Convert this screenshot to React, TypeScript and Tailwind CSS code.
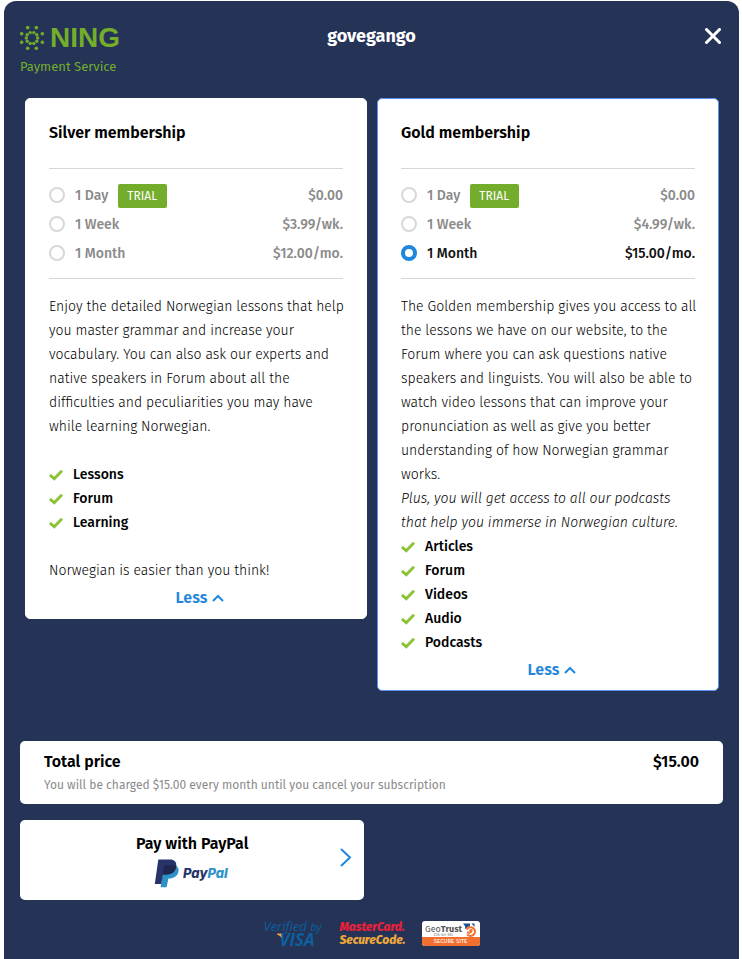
import { useState } from "react";
import type { ReactNode } from "react";

type Option = { id: string; label: string; price: string; trial?: boolean; amount: string };

const silverOptions: Option[] = [
  { id: "silver-day", label: "1 Day", price: "$0.00", trial: true, amount: "$0.00" },
  { id: "silver-week", label: "1 Week", price: "$3.99/wk.", amount: "$3.99" },
  { id: "silver-month", label: "1 Month", price: "$12.00/mo.", amount: "$12.00" },
];

const goldOptions: Option[] = [
  { id: "gold-day", label: "1 Day", price: "$0.00", trial: true, amount: "$0.00" },
  { id: "gold-week", label: "1 Week", price: "$4.99/wk.", amount: "$4.99" },
  { id: "gold-month", label: "1 Month", price: "$15.00/mo.", amount: "$15.00" },
];

const outerDots = [
  [7.7, 1.7], [16.3, 1.7], [1.7, 7.7], [22.3, 7.7],
  [1.7, 16.3], [22.3, 16.3], [7.7, 22.3], [16.3, 22.3],
];

const innerDots = [
  [10.2, 6.6], [13.8, 6.6], [7.2, 8.8], [16.8, 8.8], [6.3, 12], [17.7, 12],
  [7.2, 15.2], [16.8, 15.2], [10.2, 17.4], [13.8, 17.4],
];

function NingLogo() {
  return (
    <div className="flex flex-col text-[#73ad2b]">
      <div className="flex h-6 items-center gap-1.5">
        <svg viewBox="0 0 24 24" className="size-6 fill-current" aria-hidden="true">
          {outerDots.map(([x, y]) => (
            <circle key={`${x}-${y}`} cx={x} cy={y} r="1.8" />
          ))}
          {innerDots.map(([x, y]) => (
            <circle key={`${x}-${y}`} cx={x} cy={y} r="1.7" />
          ))}
        </svg>
        <span className="font-['Liberation_Sans',sans-serif] text-[28px] leading-6 font-bold">NING</span>
      </div>
      <span className="mt-[7px] text-[13px] leading-5">Payment Service</span>
    </div>
  );
}

function Check() {
  return (
    <svg viewBox="0 0 14 12" className="h-3 w-3.5" fill="none" stroke="#8bc234" strokeWidth="2.8" aria-hidden="true">
      <path d="M1 5.9 L5.2 9.7 L13 1.7" />
    </svg>
  );
}

function Features({ items }: { items: string[] }) {
  return (
    <ul>
      {items.map((item) => (
        <li key={item} className="flex items-center gap-2.5 font-medium text-black">
          <Check />
          {item}
        </li>
      ))}
    </ul>
  );
}

type CardProps = {
  title: string;
  options: Option[];
  selected: string;
  onSelect: (id: string) => void;
  children: ReactNode;
};

function MembershipCard({ title, options, selected, onSelect, children }: CardProps) {
  const active = options.some((option) => option.id === selected);
  return (
    <section
      className={`rounded-[5px] border bg-white px-[23px] pt-6 pb-2 ${active ? "border-[#5b93ee]" : "border-white"}`}
    >
      <h2 className="text-base leading-5 font-semibold text-black">{title}</h2>
      <div className="mt-[25px] flex flex-col gap-[5px] border-y border-[#d6d6d6] pt-[15px] pb-3">
        {options.map((option) => {
          const checked = option.id === selected;
          return (
            <label
              key={option.id}
              htmlFor={option.id}
              className={`flex h-6 items-center text-sm font-medium ${checked ? "text-[#111111]" : "text-[#8a8a8a]"}`}
            >
              <input
                id={option.id}
                type="radio"
                name="membership"
                checked={checked}
                onChange={() => onSelect(option.id)}
                className="mr-2.5 mb-0.5 size-4 appearance-none rounded-full border-2 border-[#d8d8d8] bg-white checked:border-4 checked:border-[#1f88dd]"
              />
              {option.label}
              {option.trial && (
                <span className="ml-2.5 rounded-xs bg-[#73ad2b] pr-2.5 pl-[9px] text-xs leading-6 font-normal text-white">
                  TRIAL
                </span>
              )}
              <span className="ml-auto">{option.price}</span>
            </label>
          );
        })}
      </div>
      <div className="mt-4 -mr-1 text-sm leading-6 font-light text-black">{children}</div>
      <button
        type="button"
        className="mx-auto mt-[3px] flex items-center gap-[5px] pl-2 text-base leading-6 font-semibold text-[#1f88dd]"
      >
        Less
        <svg viewBox="0 0 12 8" className="h-2 w-3" fill="none" stroke="currentColor" strokeWidth="2" aria-hidden="true">
          <path d="M1 7 L6 2 L11 7" />
        </svg>
      </button>
    </section>
  );
}

function PayPalLogo() {
  return (
    <svg viewBox="0 0 76 30" className="h-[30px] w-[76px]" aria-hidden="true">
      <path
        d="M21.6 7.6 C24.4 9 25.1 11.4 24.4 14.1 C23.4 18 20 20.4 16.2 20.4 H14.4 L12.6 29.2 H6.6 L7.5 23 L10 9 Z"
        fill="#2c92c8"
      />
      <path
        d="M4.3 1.4 H16 C20.3 1.4 22.8 3.8 22.3 8 C21.7 13.4 18 16.4 12.5 16.4 H9 L7.2 26 H.8 Z"
        fill="#27346a"
      />
      <path
        d="M10.4 7.2 H20 C20.8 7.2 21.7 7.5 22.3 8 C21.7 13.4 18 16.4 12.5 16.4 H8.8 Z"
        fill="#1f264f"
      />
      <text x="29" y="20" fontSize="13" fontWeight="800" fontStyle="italic" fontFamily="Inter, sans-serif">
        <tspan fill="#27346a">Pay</tspan>
        <tspan fill="#2c92c8">Pal</tspan>
      </text>
    </svg>
  );
}

function VerifiedByVisa() {
  return (
    <div className="flex w-[60px] flex-col font-['Open_Sans',sans-serif] text-[#0d609f] italic">
      <span className="text-[13px] leading-3 whitespace-nowrap">
        Verified <span className="text-[11px]">by</span>
      </span>
      <span className="flex items-start pl-3.5">
        <svg viewBox="0 0 6 8" className="-mr-1 h-2 w-1.5" aria-hidden="true">
          <path d="M0 .6 H3.6 C4.8 .6 5.2 1.4 5.4 2.4 L6 8 C5 4.6 3 2.6 0 1.6 Z" fill="#e9a63a" />
        </svg>
        <span className="text-[17px] leading-[14px] font-bold">VISA</span>
      </span>
    </div>
  );
}

function MasterCardSecureCode() {
  return (
    <div className="flex flex-col text-xs leading-[13px] font-extrabold italic">
      <span className="text-[#e8203a]">MasterCard.</span>
      <span className="text-[#eda73b]">SecureCode.</span>
    </div>
  );
}

function GeoTrust() {
  return (
    <div className="flex h-[25px] w-[58px] flex-col overflow-hidden rounded-[3px] bg-white">
      <div className="flex h-4 items-start justify-center">
        <span className="flex flex-col items-center pt-1">
          <span className="text-[9px] leading-[8px] text-[#555555]">
            Geo<span className="font-bold">Trust</span>
          </span>
          <span className="text-[4px] leading-[4px] text-[#777777]">256-bit SSL</span>
        </span>
        <svg viewBox="0 0 14 14" className="mt-0.5 size-3.5" aria-hidden="true">
          <path d="M1 .5 H8 V3 A6 6 0 0 0 3.4 6.2 A6.6 6.6 0 0 0 1 .5 Z" fill="#1c4f8f" />
          <path d="M9.5 .5 H12.5 V4 Z" fill="#1c4f8f" />
          <path d="M5.2 11.4 A4.4 4.4 0 1 0 4.6 6.6 M5 9.2 C7 10.4 9.4 9.6 9.6 7.4 M7.2 7.2 H10.6" fill="none" stroke="#f1702f" strokeWidth="2" />
        </svg>
      </div>
      <span className="bg-[#f1702f] text-center text-[6px] leading-[9px] font-normal text-white">SECURE SITE</span>
    </div>
  );
}

export default function App() {
  const [selected, setSelected] = useState("gold-month");
  const current = [...silverOptions, ...goldOptions].find((option) => option.id === selected);
  const amount = current ? current.amount : "$0.00";
  const period = selected.endsWith("week") ? "week" : selected.endsWith("day") ? "day" : "month";

  return (
    <div className="bg-white pt-px pr-[3px] pl-1 font-['Fira_Sans',Roboto,sans-serif]">
      <main className="min-h-[calc(100vh-1px)] rounded-t-xl bg-[#243356] px-4 pt-[25px] pb-3">
        <header className="grid grid-cols-[1fr_auto_1fr] items-start">
          <NingLogo />
          <h1 className="text-lg leading-5 font-bold text-white">govegango</h1>
          <button type="button" aria-label="Close" className="justify-self-end p-0.5 text-white">
            <svg viewBox="0 0 16 16" className="size-4" fill="none" stroke="currentColor" strokeWidth="3" strokeLinecap="round" aria-hidden="true">
              <path d="M1.5 1.5 L14.5 14.5 M14.5 1.5 L1.5 14.5" />
            </svg>
          </button>
        </header>

        <div className="mt-[21px] grid grid-cols-2 items-start gap-2.5 pr-1 pl-[5px]">
          <MembershipCard title="Silver membership" options={silverOptions} selected={selected} onSelect={setSelected}>
            <p>
              Enjoy the detailed Norwegian lessons that help you master grammar and increase your vocabulary. You can
              also ask our experts and native speakers in Forum about all the difficulties and peculiarities you may
              have while learning Norwegian.
            </p>
            <div className="py-6">
              <Features items={["Lessons", "Forum", "Learning"]} />
            </div>
            <p>Norwegian is easier than you think!</p>
          </MembershipCard>

          <MembershipCard title="Gold membership" options={goldOptions} selected={selected} onSelect={setSelected}>
            <p>
              The Golden membership gives you access to all the lessons we have on our website, to the Forum where you
              can ask questions native speakers and linguists. You will also be able to watch video lessons that can
              improve your pronunciation as well as give you better understanding of how Norwegian grammar works.
            </p>
            <p className="italic">
              Plus, you will get access to all our podcasts that help you immerse in Norwegian culture.
            </p>
            <Features items={["Articles", "Forum", "Videos", "Audio", "Podcasts"]} />
          </MembershipCard>
        </div>

        <section className="mt-[50px] rounded-[5px] bg-white px-6 pt-[9px] pb-[7px]">
          <div className="flex justify-between text-base leading-6 font-semibold text-black">
            <h2>Total price</h2>
            <span>{amount}</span>
          </div>
          <p className="text-xs leading-[23px] text-[#8a8a8a]">
            You will be charged {amount} every {period} until you cancel your subscription
          </p>
        </section>

        <button
          type="button"
          className="mt-4 grid h-20 w-[49%] grid-cols-[1fr_auto_1fr] items-center rounded-[5px] bg-white px-3 text-black"
        >
          <span className="col-start-2 flex flex-col items-center gap-0.5">
            <span className="text-base leading-6 font-semibold">Pay with PayPal</span>
            <PayPalLogo />
          </span>
          <svg viewBox="0 0 12 20" className="mb-1 h-5 w-3 justify-self-end" fill="none" stroke="#1f88dd" strokeWidth="2" aria-hidden="true">
            <path d="M1 1 L10 9.5 L1 18" />
          </svg>
        </button>

        <footer className="mt-5 flex items-center justify-center gap-4">
          <VerifiedByVisa />
          <MasterCardSecureCode />
          <GeoTrust />
        </footer>
      </main>
    </div>
  );
}
